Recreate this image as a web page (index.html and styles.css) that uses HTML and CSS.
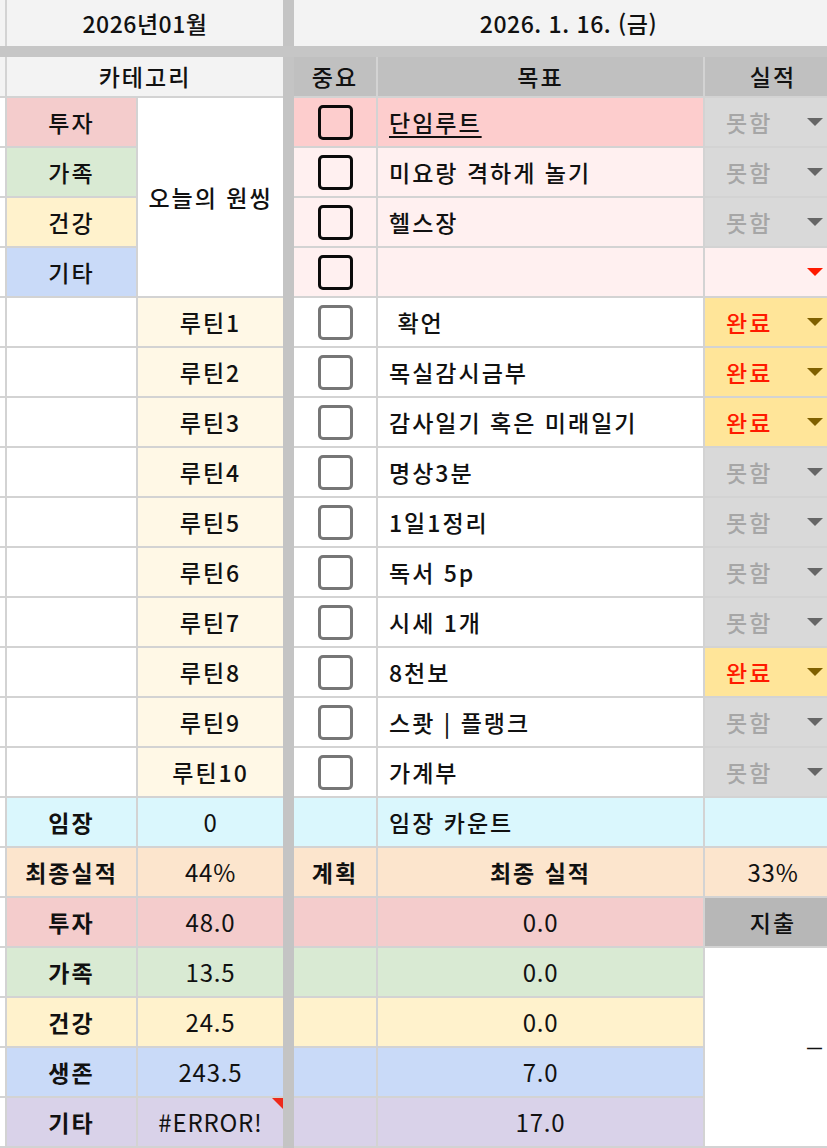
FILE: index.html
```html
<!DOCTYPE html>
<html lang="ko">
<head>
<meta charset="utf-8">
<title>2026년01월</title>
<link rel="stylesheet" href="styles.css">
</head>
<body>
<div class="sheet">
  <div class="vdiv"></div>
  <div class="hdiv"></div>

  <!-- row 1 -->
  <div class="edge light"></div>
  <div class="c light span2 ls1">2026년01월</div>
  <div class="c light span3 date ls1">2026. 1. 16. (금)</div>

  <!-- header row -->
  <div class="edge light"></div>
  <div class="c light span2">카테고리</div>
  <div class="c head">중요</div>
  <div class="c head">목표</div>
  <div class="c head pr">실적</div>

  <!-- category rows -->
  <div class="edge"></div>
  <div class="c pink">투자</div>
  <div class="c white rs4">오늘의 원씽</div>
  <div class="c pinkstrong"><span class="cb"></span></div>
  <div class="c pinkstrong left"><span class="ul">단임루트</span></div>
  <div class="c gray sel"><span class="no">못함</span><span class="tri"></span></div>

  <div class="edge"></div>
  <div class="c green">가족</div>
  <div class="c pinklight"><span class="cb"></span></div>
  <div class="c pinklight left">미요랑 격하게 놀기</div>
  <div class="c gray sel"><span class="no">못함</span><span class="tri"></span></div>

  <div class="edge"></div>
  <div class="c yellow">건강</div>
  <div class="c pinklight"><span class="cb"></span></div>
  <div class="c pinklight left">헬스장</div>
  <div class="c gray sel"><span class="no">못함</span><span class="tri"></span></div>

  <div class="edge"></div>
  <div class="c blue">기타</div>
  <div class="c pinklight"><span class="cb"></span></div>
  <div class="c pinklight left"></div>
  <div class="c pinklight sel"><span></span><span class="tri red"></span></div>

  <!-- routines -->
  <div class="edge"></div><div class="c white"></div>
  <div class="c cream">루틴1</div>
  <div class="c white"><span class="cb g"></span></div>
  <div class="c white left pre"> 확언</div>
  <div class="c amber sel"><span class="ok">완료</span><span class="tri brown"></span></div>

  <div class="edge"></div><div class="c white"></div>
  <div class="c cream">루틴2</div>
  <div class="c white"><span class="cb g"></span></div>
  <div class="c white left">목실감시금부</div>
  <div class="c amber sel"><span class="ok">완료</span><span class="tri brown"></span></div>

  <div class="edge"></div><div class="c white"></div>
  <div class="c cream">루틴3</div>
  <div class="c white"><span class="cb g"></span></div>
  <div class="c white left">감사일기 혹은 미래일기</div>
  <div class="c amber sel"><span class="ok">완료</span><span class="tri brown"></span></div>

  <div class="edge"></div><div class="c white"></div>
  <div class="c cream">루틴4</div>
  <div class="c white"><span class="cb g"></span></div>
  <div class="c white left">명상3분</div>
  <div class="c gray sel"><span class="no">못함</span><span class="tri"></span></div>

  <div class="edge"></div><div class="c white"></div>
  <div class="c cream">루틴5</div>
  <div class="c white"><span class="cb g"></span></div>
  <div class="c white left">1일1정리</div>
  <div class="c gray sel"><span class="no">못함</span><span class="tri"></span></div>

  <div class="edge"></div><div class="c white"></div>
  <div class="c cream">루틴6</div>
  <div class="c white"><span class="cb g"></span></div>
  <div class="c white left">독서 5p</div>
  <div class="c gray sel"><span class="no">못함</span><span class="tri"></span></div>

  <div class="edge"></div><div class="c white"></div>
  <div class="c cream">루틴7</div>
  <div class="c white"><span class="cb g"></span></div>
  <div class="c white left">시세 1개</div>
  <div class="c gray sel"><span class="no">못함</span><span class="tri"></span></div>

  <div class="edge"></div><div class="c white"></div>
  <div class="c cream">루틴8</div>
  <div class="c white"><span class="cb g"></span></div>
  <div class="c white left">8천보</div>
  <div class="c amber sel"><span class="ok">완료</span><span class="tri brown"></span></div>

  <div class="edge"></div><div class="c white"></div>
  <div class="c cream">루틴9</div>
  <div class="c white"><span class="cb g"></span></div>
  <div class="c white left">스쾃 | 플랭크</div>
  <div class="c gray sel"><span class="no">못함</span><span class="tri"></span></div>

  <div class="edge"></div><div class="c white"></div>
  <div class="c cream">루틴10</div>
  <div class="c white"><span class="cb g"></span></div>
  <div class="c white left">가계부</div>
  <div class="c gray sel"><span class="no">못함</span><span class="tri"></span></div>

  <!-- 임장 -->
  <div class="edge"></div>
  <div class="c cyan b">임장</div>
  <div class="c cyan num">0</div>
  <div class="c cyan"></div>
  <div class="c cyan left">임장 카운트</div>
  <div class="c cyan"></div>

  <!-- 최종실적 -->
  <div class="edge"></div>
  <div class="c peach b">최종실적</div>
  <div class="c peach num">44%</div>
  <div class="c peach b">계획</div>
  <div class="c peach b">최종 실적</div>
  <div class="c peach pr num">33%</div>

  <!-- summary -->
  <div class="edge"></div>
  <div class="c pink b">투자</div>
  <div class="c pink num">48.0</div>
  <div class="c pink"></div>
  <div class="c pink num">0.0</div>
  <div class="c darkgray pr">지출</div>

  <div class="edge"></div>
  <div class="c green b">가족</div>
  <div class="c green num">13.5</div>
  <div class="c green"></div>
  <div class="c green num">0.0</div>
  <div class="c white rs4 dash">—</div>

  <div class="edge"></div>
  <div class="c yellow b">건강</div>
  <div class="c yellow num">24.5</div>
  <div class="c yellow"></div>
  <div class="c yellow num">0.0</div>

  <div class="edge"></div>
  <div class="c blue b">생존</div>
  <div class="c blue num">243.5</div>
  <div class="c blue"></div>
  <div class="c blue num">7.0</div>

  <div class="edge"></div>
  <div class="c purple b">기타</div>
  <div class="c purple err num">#ERROR!</div>
  <div class="c purple"></div>
  <div class="c purple num">17.0</div>
</div>
</body>
</html>
```

FILE: styles.css
```css
html, body {
  margin: 0;
  padding: 0;
  background: #ffffff;
}

body {
  font-family: "Noto Sans CJK KR", "Noto Sans", sans-serif;
  font-size: 23px;
  font-weight: 500;
  letter-spacing: 2px;
  color: #111111;
  width: 827px;
  height: 1148px;
  overflow: hidden;
}

.sheet {
  display: grid;
  grid-template-columns: 5px 129px 145px 7px 82px 325px 122px;
  grid-template-rows: 46px 7px 39px repeat(21, 48px);
  gap: 2px;
  padding-bottom: 2px;
  background: #d3d3d3;
  width: 827px;
}

.vdiv {
  grid-column: 4;
  grid-row: 1 / -1;
  margin: 0 -2px -2px -2px;
  background: #c4c4c4;
}

.hdiv {
  grid-column: 1 / -1;
  grid-row: 2;
  margin: -2px 0;
  background: #c6c6c6;
}

.edge { background: #ffffff; }
.edge.light { background: #f3f3f3; }

.c {
  display: flex;
  align-items: center;
  justify-content: center;
  white-space: nowrap;
  line-height: 1;
  min-width: 0;
  overflow: hidden;
}

.span2 { grid-column: span 2; }
.span3 { grid-column: span 3; }
.rs4 { grid-row: span 4; }

.ls1 { letter-spacing: 0.5px; }
.num { letter-spacing: 0.8px; font-weight: 400; font-size: 24px; }

.date { padding-left: 16px; }

.left { justify-content: flex-start; padding-left: 11px; }
.pre { white-space: pre; }
.pr { padding-left: 14px; }
.b { font-weight: 700; }

.light { background: #f3f3f3; }
.head { background: #c0c0c0; }
.white { background: #ffffff; }
.pink { background: #f4cccc; }
.pinkstrong { background: #fdcdcd; }
.pinklight { background: #fff0f0; }
.green { background: #d9ead3; }
.yellow { background: #fff2cc; }
.blue { background: #c9daf8; }
.purple { background: #d9d2e9; }
.cream { background: #fff8e6; }
.cyan { background: #daf7fd; }
.peach { background: #fce5cd; }
.gray { background: #d9d9d9; }
.darkgray { background: #b7b7b7; }
.amber { background: #ffe599; }

.ul {
  text-decoration: underline;
  text-decoration-thickness: 2px;
  text-underline-offset: 4px;
}

.cb {
  box-sizing: border-box;
  width: 35px;
  height: 35px;
  border: 3px solid #0a0a0a;
  border-radius: 5px;
}

.cb.g { border-color: #767676; }

.sel {
  justify-content: space-between;
  padding-left: 21px;
  padding-right: 4px;
}

.no { color: #a6a6a6; }
.ok { color: #ff1a00; }

.tri {
  width: 0;
  height: 0;
  border-left: 8px solid transparent;
  border-right: 8px solid transparent;
  border-top: 8px solid #666666;
}

.tri.brown { border-top-color: #7f6000; }
.tri.red { border-top-color: #ff1a00; }

.dash {
  justify-content: flex-end;
  padding-right: 5px;
  font-family: "Liberation Sans", "DejaVu Sans", sans-serif;
  font-size: 15px;
  font-weight: 700;
  letter-spacing: 0;
}

.err { position: relative; }
.err::after {
  content: "";
  position: absolute;
  top: 0;
  right: 0;
  width: 0;
  height: 0;
  border-top: 11px solid #ee2a1b;
  border-left: 11px solid transparent;
}
```
